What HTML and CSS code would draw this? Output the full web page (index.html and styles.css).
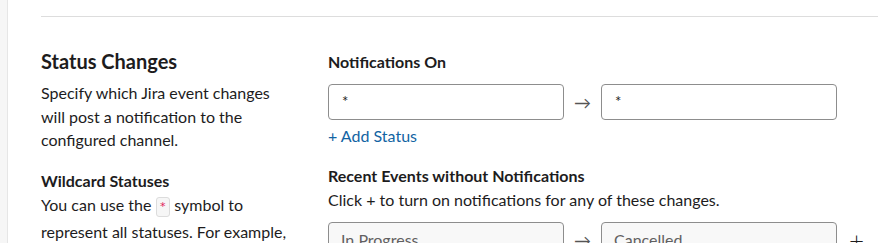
FILE: index.html
```html
<!DOCTYPE html>
<html lang="en">
<head>
  <meta charset="UTF-8">
  <title>Status Changes</title>
  <link rel="stylesheet" href="styles.css">
</head>
<body>
  <div class="page">
    <div class="rail"></div>
    <div class="main">
      <hr class="divider">
      <div class="section">
        <div class="about">
          <h2>Status Changes</h2>
          <p>Specify which Jira event changes will post a notification to the configured channel.</p>
          <h3>Wildcard Statuses</h3>
          <p class="wild">You can use the <code>*</code> symbol to represent all statuses. For example, <code>*</code> &rarr; Done will post whenever an issue moves to Done.</p>
        </div>
        <div class="config">
          <h4>Notifications On</h4>
          <div class="row">
            <div class="field">*</div>
            <span class="arrow">&rarr;</span>
            <div class="field">*</div>
          </div>
          <a class="add" href="#">+ Add Status</a>

          <h4 class="recent">Recent Events without Notifications</h4>
          <p class="hint">Click + to turn on notifications for any of these changes.</p>
          <div class="row">
            <div class="field muted">In Progress</div>
            <span class="arrow">&rarr;</span>
            <div class="field muted">Cancelled</div>
            <span class="plus">+</span>
          </div>
        </div>
      </div>
    </div>
  </div>
</body>
</html>
```
FILE: styles.css
```css
body {
  margin: 0;
  font-family: Lato, "Open Sans", sans-serif;
  color: #1d1c1d;
  background: #fff;
  overflow: hidden;
}

.page {
  display: flex;
  min-height: 243px;
}

.rail {
  width: 7px;
  background: #f6f6f6;
  border-right: 1px solid #e6e6e6;
  flex-shrink: 0;
}

.main {
  flex: 1;
  padding-left: 33px;
}

.divider {
  border: 0;
  border-top: 1px solid #dddddd;
  margin: 16px 0 0 0;
}

.section {
  display: flex;
  padding-top: 31px;
}

.about {
  width: 250px;
  margin-right: 37px;
  flex-shrink: 0;
}

.about h2 {
  font-size: 20px;
  font-weight: 700;
  margin: 0 0 7px 0;
  line-height: 26px;
}

.about p {
  font-size: 16px;
  line-height: 23.5px;
  margin: 0 0 18px 0;
}

.about h3 {
  font-size: 16px;
  font-weight: 700;
  margin: 0;
  line-height: 22px;
}

.about p.wild {
  line-height: 27px;
  margin-top: -1px;
}

code {
  display: inline-block;
  font-family: "DejaVu Sans Mono", monospace;
  font-size: 11px;
  line-height: 14px;
  color: #e01e5a;
  background: #f6f6f6;
  border: 1px solid #dcdcdc;
  border-radius: 3px;
  padding: 2px 3px;
  vertical-align: 1px;
}

.config {
  width: 560px;
  flex-shrink: 0;
}

.config h4 {
  font-size: 16px;
  font-weight: 700;
  margin: 4px 0 12px 0;
  line-height: 20px;
}

.row {
  display: flex;
  align-items: center;
}

.field {
  width: 236px;
  height: 36px;
  flex-shrink: 0;
  box-sizing: border-box;
  border: 1px solid #8d8d8d;
  border-radius: 4px;
  padding: 0 13px;
  font-size: 15px;
  line-height: 32px;
  color: #1d1c1d;
}

.field.muted {
  background: #f8f8f8;
  color: #616061;
  line-height: 34px;
  font-size: 16px;
  padding: 0 12px;
}

.arrow {
  width: 37px;
  flex-shrink: 0;
  text-align: center;
  font-size: 17px;
  color: #555;
}

.plus {
  margin-left: 12px;
  font-size: 26px;
  font-weight: 300;
  color: #1d1c1d;
}

.add {
  display: inline-block;
  margin-top: 6px;
  font-size: 16px;
  color: #1264a3;
  text-decoration: none;
  line-height: 20px;
}

.config h4.recent {
  margin: 20px 0 0 0;
}

.hint {
  font-size: 16px;
  margin: 4px 0 12px 0;
  line-height: 20px;
}
```
